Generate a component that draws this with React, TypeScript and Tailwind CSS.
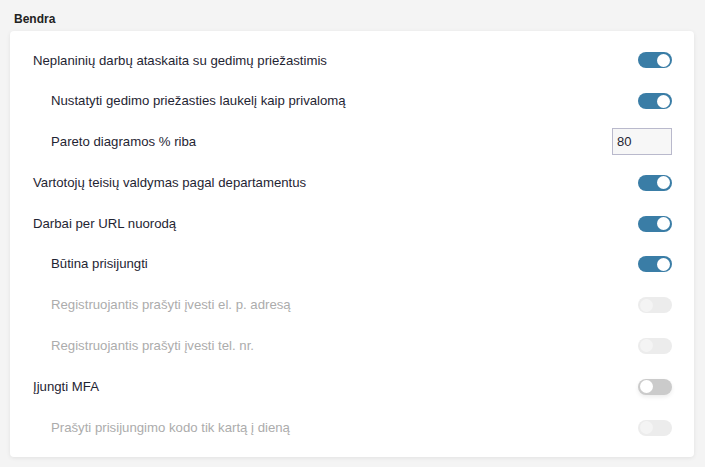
import React from "react";

type Row = {
  label: string;
  indent?: boolean;
  state: "on" | "off" | "disabled" | "input";
  value?: string;
};

const rows: Row[] = [
  { label: "Neplaninių darbų ataskaita su gedimų priežastimis", state: "on" },
  { label: "Nustatyti gedimo priežasties laukelį kaip privalomą", indent: true, state: "on" },
  { label: "Pareto diagramos % riba", indent: true, state: "input", value: "80" },
  { label: "Vartotojų teisių valdymas pagal departamentus", state: "on" },
  { label: "Darbai per URL nuorodą", state: "on" },
  { label: "Būtina prisijungti", indent: true, state: "on" },
  { label: "Registruojantis prašyti įvesti el. p. adresą", indent: true, state: "disabled" },
  { label: "Registruojantis prašyti įvesti tel. nr.", indent: true, state: "disabled" },
  { label: "Įjungti MFA", state: "off" },
  { label: "Prašyti prisijungimo kodo tik kartą į dieną", indent: true, state: "disabled" },
];

function Toggle({ state }: { state: "on" | "off" | "disabled" }) {
  if (state === "on") {
    return (
      <div className="w-[34px] h-[16px] rounded-full bg-[#3a7da6] flex items-center justify-end px-[2px]">
        <div className="w-[13px] h-[13px] rounded-full bg-white" />
      </div>
    );
  }
  if (state === "off") {
    return (
      <div className="w-[34px] h-[16px] rounded-full bg-[#cbcbcb] flex items-center justify-start px-[2px] shadow-[0_2px_4px_rgba(0,0,0,0.08)]">
        <div className="w-[13px] h-[13px] rounded-full bg-white" />
      </div>
    );
  }
  return (
    <div className="w-[34px] h-[16px] rounded-full bg-[#ececec] flex items-center justify-start px-[2px]">
      <div className="w-[13px] h-[13px] rounded-full bg-[#f4f4f4]" />
    </div>
  );
}

export default function App() {
  return (
    <div
      className="w-[705px] h-[467px] bg-[#f4f4f4] pt-[12px] pl-[10px] pr-[11px]"
      style={{ fontFamily: '"Liberation Sans", Arial, sans-serif' }}
    >
      <h2 className="text-[12px] font-bold text-[#222] leading-[14px] pl-[4px]">Bendra</h2>

      <div className="mt-[5px] bg-white rounded-[4px] shadow-[0_1px_4px_rgba(0,0,0,0.08)] pt-[9px] pb-[9px] pl-[23px] pr-[22px]">
        {rows.map((row) => (
          <div key={row.label} className="h-[40.8px] flex items-center justify-between">
            <span
              className={`text-[13.2px] ${row.indent ? "pl-[18px]" : ""} ${
                row.state === "disabled" ? "text-[#acacac]" : "text-[#1f2533]"
              }`}
            >
              {row.label}
            </span>
            {row.state === "input" ? (
              <input
                defaultValue={row.value}
                className="w-[60px] h-[27px] border border-[#b9b9cc] bg-[#f7f7f7] px-[4px] text-[13px] text-[#1f2533] outline-none"
              />
            ) : (
              <Toggle state={row.state} />
            )}
          </div>
        ))}
      </div>
    </div>
  );
}
